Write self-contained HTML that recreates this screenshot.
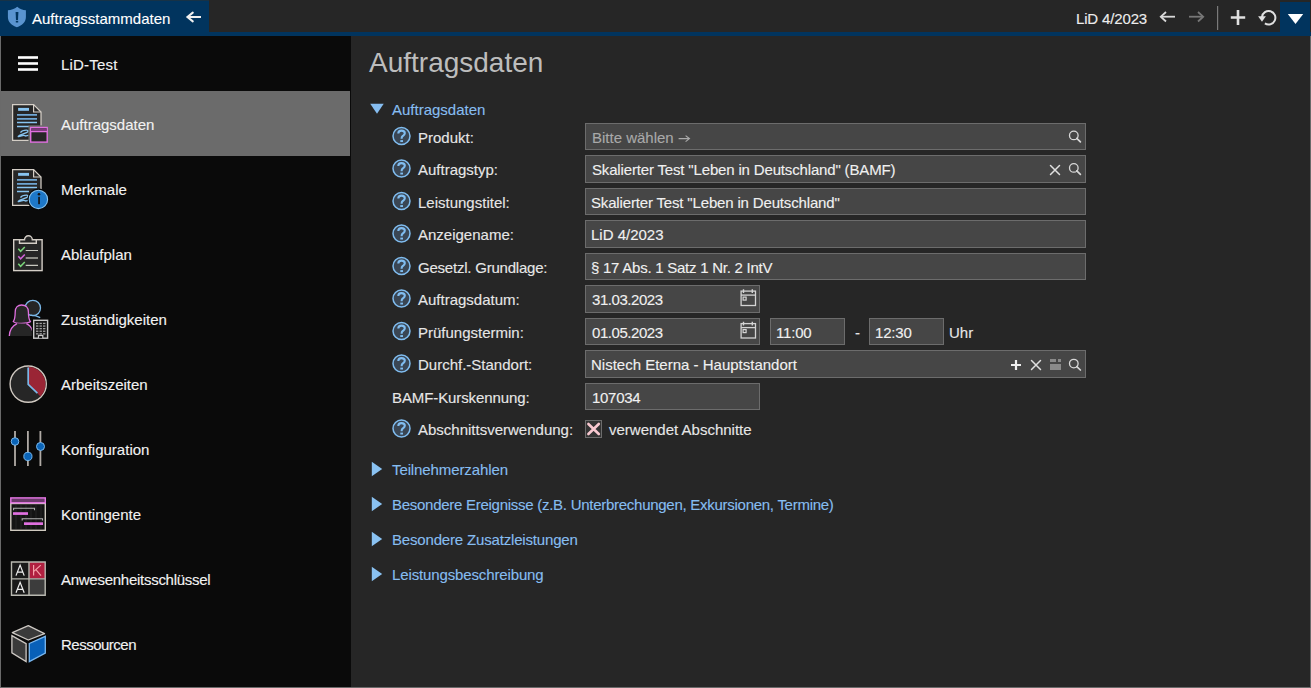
<!DOCTYPE html>
<html><head><meta charset="utf-8">
<style>
*{margin:0;padding:0;box-sizing:border-box}
html,body{width:1311px;height:688px;overflow:hidden;background:#262626;font-family:"Liberation Sans",sans-serif;font-size:15px;color:#ececec}
.a{position:absolute}
.t{position:absolute;white-space:pre;line-height:18px;margin-top:1px;-webkit-text-stroke:0.12px currentColor}
svg{position:absolute;overflow:visible}
#topline{left:0;top:0;width:209px;height:1px;background:#173246}
#tab{left:0;top:1px;width:209px;height:31px;background:#01345e}
#uline{left:0;top:32px;width:1311px;height:4px;background:#01345e}
#dd{left:1280px;top:2px;width:30px;height:30px;background:#01345e}
#side{left:0;top:36px;width:351px;height:651px;background:#0a0a0a}
#sideb{left:0;top:36px;width:1px;height:652px;background:#6a6a6a}
#rightb{left:1310px;top:36px;width:1px;height:652px;background:#6a6a6a}
#botb{left:0;top:687px;width:1311px;height:1px;background:#6a6a6a}
#sel{left:1px;top:91px;width:349px;height:65px;background:#6b6b6b}
.mi{left:61px;color:#f2f2f2}
.lbl{color:#e6e6e6}
.inp{position:absolute;background:#464646;border:1px solid #6c6c6c;height:28px}
.it{position:absolute;left:6px;top:5px;white-space:pre;line-height:18px;color:#f0f0f0;-webkit-text-stroke:0.12px currentColor}
.sec{color:#86bdf0}
</style></head><body>
<div class="a" id="topline"></div>
<div class="a" id="tab"></div>
<div class="a" id="uline"></div>
<div class="a" id="dd"></div>
<div class="a" id="side"></div>
<div class="a" id="sideb"></div>
<div class="a" id="rightb"></div>
<div class="a" id="botb"></div>
<div class="a" id="sel"></div>

<!-- title bar -->
<svg style="left:0;top:0" width="40" height="36" viewBox="0 0 40 36">
 <path d="M17.3,6.8 C14.5,9 11,10.2 7.9,10.2 V17 C7.9,22 11.5,25.5 16.9,27.2 C22.3,25.5 25.9,22 25.9,17 V10.2 C22.8,10.2 19.6,9 17.3,6.8Z" fill="#5a94d0"/>
 <path d="M15.6,12 H18.4 L18,20 H16 Z" fill="#01345e"/>
 <rect x="15.8" y="20.8" width="2.4" height="1.7" fill="#01345e"/>
</svg>
<div class="t" style="left:32px;top:9px;color:#fff">Auftragsstammdaten</div>
<svg style="left:180px;top:0" width="30" height="36" viewBox="0 0 30 36">
 <path d="M7,17 H21" stroke="#f0f0f0" stroke-width="2" fill="none"/>
 <path d="M12.8,12.6 L7.4,17 L12.8,21.4" stroke="#f0f0f0" stroke-width="2" fill="none" stroke-linecap="round"/>
</svg>
<div class="t" style="left:1076px;top:9px;color:#ededed;letter-spacing:-0.15px">LiD 4/2023</div>
<svg style="left:1150px;top:0" width="160" height="32" viewBox="0 0 160 32">
 <path d="M11,16.7 H25" stroke="#d8d8d8" stroke-width="1.8" fill="none"/>
 <path d="M16,12 L10.8,16.7 L16,21.5" stroke="#d8d8d8" stroke-width="1.8" fill="none"/>
 <path d="M39,16.7 H53" stroke="#777" stroke-width="1.8" fill="none"/>
 <path d="M48,12 L53.2,16.7 L48,21.5" stroke="#777" stroke-width="1.8" fill="none"/>
 <rect x="67" y="6" width="1.2" height="24" fill="#7a7a7a"/>
 <path d="M88,10 V25 M80.8,17.5 H95.2" stroke="#e0e0e0" stroke-width="2.6" fill="none"/>
 <path d="M112,17 A6.7,6.7 0 1 1 114.9,23.3" stroke="#e0e0e0" stroke-width="2" fill="none"/>
 <path d="M108.1,16.2 L115.9,16.2 L112,21.7 Z" fill="#e0e0e0"/>
 <path d="M137.8,13.9 H153.2 L145.5,24 Z" fill="#fff"/>
</svg>

<!-- sidebar -->
<svg style="left:0;top:36px" width="351" height="650" viewBox="0 36 351 650">
 <rect x="18" y="56.2" width="20" height="2.6" fill="#fff"/>
 <rect x="18" y="62.2" width="20" height="2.6" fill="#fff"/>
 <rect x="18" y="68.2" width="20" height="2.6" fill="#fff"/>
</svg>
<div class="t mi" style="top:55px;letter-spacing:0.2px">LiD-Test</div>
<div class="t mi" style="top:115px">Auftragsdaten</div>
<div class="t mi" style="top:180px">Merkmale</div>
<div class="t mi" style="top:245px">Ablaufplan</div>
<div class="t mi" style="top:310px">Zuständigkeiten</div>
<div class="t mi" style="top:375px">Arbeitszeiten</div>
<div class="t mi" style="top:440px">Konfiguration</div>
<div class="t mi" style="top:505px">Kontingente</div>
<div class="t mi" style="top:570px;letter-spacing:-0.27px">Anwesenheitsschlüssel</div>
<div class="t mi" style="top:635px;letter-spacing:-0.5px">Ressourcen</div>
<!--ICONS--><svg style="left:0;top:0" width="351" height="688" viewBox="0 0 351 688">
<g transform="translate(5,97)"><path d="M7.6,7.6 H28.6 L36,15 V43.3 H7.6 Z" fill="#262626" stroke="#d4cec6" stroke-width="1.25"/><path d="M28.6,7.6 V15 H36" fill="none" stroke="#d4cec6" stroke-width="1.2"/><rect x="13.1" y="10.9" width="10.9" height="2.9" fill="#88c4f0"/><path d="M12,17.8 H32 M12,21.8 H32" stroke="#6fa6d4" stroke-width="1.7"/><path d="M12,25.4 H32 M12,29.4 H24" stroke="#88c4f0" stroke-width="1.5"/><path d="M15.5,35.6 C16.5,33.9 19,33.1 21.5,33.1 C23.6,33.1 23.6,34.6 21.5,35.6 C19.5,36.6 17,37.1 15,38.1 C13.5,38.9 12.8,39.6 13.6,39.6 C15.5,39.6 17,38.4 18.5,38.4 C20,38.4 20,39.1 21,38.9 C22,38.7 22.5,38.4 23.5,38.4" fill="none" stroke="#88c4f0" stroke-width="1.4"/><rect x="23.5" y="28.3" width="21" height="19" fill="#6b6b6b"/><rect x="25.7" y="30.5" width="16.5" height="14.6" fill="#262626" stroke="#e070e0" stroke-width="1.4"/><rect x="26.4" y="31.2" width="15.1" height="2.8" fill="#7a3a7a"/><path d="M25.7,34.6 H42.2" stroke="#e070e0" stroke-width="1.3"/></g>
<g transform="translate(5,162)"><path d="M7.6,7.6 H28.6 L36,15 V43.3 H7.6 Z" fill="#262626" stroke="#d4cec6" stroke-width="1.25"/><path d="M28.6,7.6 V15 H36" fill="none" stroke="#d4cec6" stroke-width="1.2"/><rect x="13.1" y="10.9" width="10.9" height="2.9" fill="#88c4f0"/><path d="M12,17.8 H32 M12,21.8 H32" stroke="#6fa6d4" stroke-width="1.7"/><path d="M12,25.4 H32 M12,29.4 H24" stroke="#88c4f0" stroke-width="1.5"/><path d="M15.5,35.6 C16.5,33.9 19,33.1 21.5,33.1 C23.6,33.1 23.6,34.6 21.5,35.6 C19.5,36.6 17,37.1 15,38.1 C13.5,38.9 12.8,39.6 13.6,39.6 C15.5,39.6 17,38.4 18.5,38.4 C20,38.4 20,39.1 21,38.9 C22,38.7 22.5,38.4 23.5,38.4" fill="none" stroke="#88c4f0" stroke-width="1.4"/><circle cx="33.4" cy="37.4" r="10.8" fill="#0a0a0a"/><circle cx="33.4" cy="37.4" r="9.2" fill="#1e78c8" stroke="#88c4f0" stroke-width="1.1"/><circle cx="34" cy="32.2" r="1.3" fill="#141414"/><rect x="33.2" y="34.8" width="1.7" height="7.4" fill="#141414"/></g>
<g transform="translate(5,227)"><rect x="8.7" y="12.7" width="28.4" height="30.9" fill="#262626" stroke="#d4cec6" stroke-width="1.4"/><path d="M14.5,12.7 V16.3 H31.3 V12.7 H27.3 A3.9,3.9 0 0 0 19.5,12.7 Z" fill="#262626" stroke="#d4cec6" stroke-width="1.4"/><path d="M13.3,21.8 L15.6,24.3 L19.8,20" fill="none" stroke="#7ad67a" stroke-width="1.5"/><path d="M13.3,29.3 L15.6,31.8 L19.8,27.5" fill="none" stroke="#d064d8" stroke-width="1.5"/><path d="M13.3,36.8 L15.6,39.3 L19.8,35" fill="none" stroke="#7ad67a" stroke-width="1.5"/><path d="M20.7,23.5 H33 M20.7,38.3 H33" stroke="#c8c8c0" stroke-width="1.2"/><path d="M20.7,31 H33" stroke="#a8a8a0" stroke-width="1.6"/></g>
<g transform="translate(5,292)"><circle cx="27.8" cy="16" r="7.7" fill="#262626" stroke="#7ab8e8" stroke-width="1.3"/><path d="M25.5,23.2 C29,23.5 32,24 35.2,25.6" fill="none" stroke="#7ab8e8" stroke-width="1.3"/><path d="M8.3,29.6 C10,27 10.2,24 10.2,20 C10.2,15.5 13,13 16.6,13 C20.5,13 23.4,15.5 23.4,20 C23.4,24 23.6,27 25.4,29.6 C23,31.2 19,31.3 16.6,31.3 C14,31.3 10,31.2 8.3,29.6 Z" fill="#262626" stroke="#e070e0" stroke-width="1.3"/><path d="M4.3,44 C4.6,37.5 8,33.5 12,31.6 H21.4 C24.5,33 26.5,35.5 27.3,38.5 V44 Z" fill="#262626" stroke="none"/><path d="M4.3,44 C4.6,37.5 8,33.5 12,31.6 M21.4,31.6 C24.5,33 26.5,35.5 27.3,38.5" fill="none" stroke="#e070e0" stroke-width="1.3"/><rect x="26.8" y="26.5" width="17.5" height="21.5" fill="#0a0a0a"/><rect x="28.7" y="28.3" width="13.9" height="17.9" fill="#1a1a1a" stroke="#c8c8c8" stroke-width="1.4"/><rect x="31" y="30.8" width="2.4" height="1.3" fill="#a0a0a0"/><rect x="31" y="33.4" width="2.4" height="1.3" fill="#a0a0a0"/><rect x="31" y="36" width="2.4" height="1.3" fill="#a0a0a0"/><rect x="31" y="38.6" width="2.4" height="1.3" fill="#a0a0a0"/><rect x="31" y="41.2" width="2.4" height="1.3" fill="#a0a0a0"/><rect x="34.5" y="30.8" width="2.4" height="1.3" fill="#a0a0a0"/><rect x="34.5" y="33.4" width="2.4" height="1.3" fill="#a0a0a0"/><rect x="34.5" y="36" width="2.4" height="1.3" fill="#a0a0a0"/><rect x="34.5" y="38.6" width="2.4" height="1.3" fill="#a0a0a0"/><rect x="34.5" y="41.2" width="2.4" height="1.3" fill="#a0a0a0"/><rect x="38" y="30.8" width="2.4" height="1.3" fill="#a0a0a0"/><rect x="38" y="33.4" width="2.4" height="1.3" fill="#a0a0a0"/><rect x="38" y="36" width="2.4" height="1.3" fill="#a0a0a0"/><rect x="38" y="38.6" width="2.4" height="1.3" fill="#a0a0a0"/><rect x="38" y="41.2" width="2.4" height="1.3" fill="#a0a0a0"/><path d="M33.5,46.2 V43.4 H37.8 V46.2" fill="#1a1a1a" stroke="#c8c8c8" stroke-width="1.2"/></g>
<g transform="translate(5,357)"><circle cx="23.2" cy="27.1" r="18.1" fill="#262626" stroke="#cfc8c0" stroke-width="1.4"/><path d="M23.2,27.1 L23.2,9.7 A17.4,17.4 0 0 1 35.5,39.4 Z" fill="#9a2535"/><path d="M23.2,10.4 V27.4 L32.4,36.2" fill="none" stroke="#7ab8e8" stroke-width="1.7"/></g>
<g transform="translate(5,422)"><path d="M10,9.1 V44 M22.9,9.1 V44 M35.4,9.1 V44" stroke="#b0aaa5" stroke-width="1.8"/><circle cx="10" cy="19.5" r="3.8" fill="#0a64b8" stroke="#7ab8ec" stroke-width="1"/><circle cx="22.9" cy="34.4" r="4.1" fill="#0a64b8" stroke="#7ab8ec" stroke-width="1"/><circle cx="35.5" cy="24.5" r="4" fill="#0a64b8" stroke="#7ab8ec" stroke-width="1"/></g>
<g transform="translate(5,487)"><rect x="5.8" y="16.5" width="34.5" height="26.8" fill="#141414" stroke="#d0cac0" stroke-width="1.4"/><path d="M11,18 V42" stroke="#2a2a2a" stroke-width="0.8"/><path d="M16,18 V42" stroke="#2a2a2a" stroke-width="0.8"/><path d="M21,18 V42" stroke="#2a2a2a" stroke-width="0.8"/><path d="M26,18 V42" stroke="#2a2a2a" stroke-width="0.8"/><path d="M31,18 V42" stroke="#2a2a2a" stroke-width="0.8"/><path d="M36,18 V42" stroke="#2a2a2a" stroke-width="0.8"/><rect x="5.8" y="10.9" width="34.5" height="4.9" fill="#6a3a6a" stroke="#e878e8" stroke-width="1.4"/><path d="M8.6,23.2 V21.3 H29.5 V23.2" fill="none" stroke="#b0b0b0" stroke-width="1.1"/><rect x="8" y="25.2" width="15" height="2.7" fill="#e070e0"/><path d="M17.2,33.6 V31.7 H37.5 V33.6" fill="none" stroke="#b0b0b0" stroke-width="1.1"/><rect x="19" y="35.3" width="19" height="2.7" fill="#e070e0"/></g>
<g transform="translate(5,552)"><rect x="6.5" y="10" width="34" height="33.3" fill="#1a1a1a"/><rect x="24.3" y="10" width="16.2" height="16.6" fill="#b02040"/><rect x="24.3" y="27.3" width="16.2" height="16" fill="#3c3c3c"/><path d="M6.5,10 H40.2 V43.3 H6.5 Z M24,10 V43.3 M6.5,26.9 H40.2" fill="none" stroke="#b8b8b0" stroke-width="1.4"/><path d="M11,23.6 L15.1,13.1 L19.2,23.6 M12.5,20.1 H17.7" fill="none" stroke="#f0f0f0" stroke-width="1.2"/><path d="M11,40.8 L15.1,30.3 L19.2,40.8 M12.5,37.3 H17.7" fill="none" stroke="#f0f0f0" stroke-width="1.2"/><path d="M28.6,13.1 V23.6 M35.8,13.1 L28.6,19.6 M30.9,17.6 L36,23.6" fill="none" stroke="#f4a0a8" stroke-width="1.2"/></g>
<g transform="translate(5,617)"><path d="M7.3,15.6 L23.3,8.7 L39.5,16.6 L23.3,23 Z" fill="#3a3a3a" stroke="#cdc8c3" stroke-width="1.3" stroke-linejoin="round"/><path d="M6.9,18.6 L21.1,26.6 V44.6 L6.9,35.8 Z" fill="#3a3a3a" stroke="#cdc8c3" stroke-width="1.3"/><path d="M24.3,26.5 L40.3,19.3 V36 L24.3,44.6 Z" fill="#0860b8" stroke="#7ab8f0" stroke-width="1.3"/></g>
</svg><!--/ICONS-->

<!-- main -->
<div class="t" style="left:369px;top:46px;font-size:28px;line-height:32px;color:#bdbdbd;-webkit-text-stroke:0">Auftragsdaten</div>
<svg style="left:360px;top:95px" width="30" height="500" viewBox="0 0 30 500">
 <path d="M10.2,8.7 H23.7 L17,18.7 Z" fill="#86bdf0"/>
 <path d="M11.8,366.8 L22.2,374 L11.8,381.2 Z" fill="#8ac2f2"/>
 <path d="M11.8,401.8 L22.2,409 L11.8,416.2 Z" fill="#8ac2f2"/>
 <path d="M11.8,436.8 L22.2,444 L11.8,451.2 Z" fill="#8ac2f2"/>
 <path d="M11.8,471.8 L22.2,479 L11.8,486.2 Z" fill="#8ac2f2"/>
</svg>
<div class="t sec" style="left:392px;top:100px">Auftragsdaten</div>
<div class="t sec" style="left:392px;top:460px;letter-spacing:-0.1px">Teilnehmerzahlen</div>
<div class="t sec" style="left:392px;top:495px;letter-spacing:-0.27px">Besondere Ereignisse (z.B. Unterbrechungen, Exkursionen, Termine)</div>
<div class="t sec" style="left:392px;top:530px;letter-spacing:-0.17px">Besondere Zusatzleistungen</div>
<div class="t sec" style="left:392px;top:565px;letter-spacing:-0.13px">Leistungsbeschreibung</div>

<svg style="left:380px;top:115px" width="40" height="340" viewBox="380 115 40 340">
<g transform="translate(0,0.0)"><circle cx="401.5" cy="136" r="8.5" fill="#3a4654" stroke="#80bdf0" stroke-width="1.5"/><path d="M398.3,133.5 C398.3,131.5 399.8,130.6 401.5,130.6 C403.4,130.6 404.8,131.6 404.8,133.2 C404.8,134.7 403.7,135.3 402.8,135.9 C401.9,136.6 401.6,137.2 401.6,138.8" stroke="#80bdf0" stroke-width="2.1" fill="none"/><rect x="400.3" y="140.1" width="2.7" height="1.9" fill="#80bdf0"/></g>
<g transform="translate(0,32.5)"><circle cx="401.5" cy="136" r="8.5" fill="#3a4654" stroke="#80bdf0" stroke-width="1.5"/><path d="M398.3,133.5 C398.3,131.5 399.8,130.6 401.5,130.6 C403.4,130.6 404.8,131.6 404.8,133.2 C404.8,134.7 403.7,135.3 402.8,135.9 C401.9,136.6 401.6,137.2 401.6,138.8" stroke="#80bdf0" stroke-width="2.1" fill="none"/><rect x="400.3" y="140.1" width="2.7" height="1.9" fill="#80bdf0"/></g>
<g transform="translate(0,65.0)"><circle cx="401.5" cy="136" r="8.5" fill="#3a4654" stroke="#80bdf0" stroke-width="1.5"/><path d="M398.3,133.5 C398.3,131.5 399.8,130.6 401.5,130.6 C403.4,130.6 404.8,131.6 404.8,133.2 C404.8,134.7 403.7,135.3 402.8,135.9 C401.9,136.6 401.6,137.2 401.6,138.8" stroke="#80bdf0" stroke-width="2.1" fill="none"/><rect x="400.3" y="140.1" width="2.7" height="1.9" fill="#80bdf0"/></g>
<g transform="translate(0,97.5)"><circle cx="401.5" cy="136" r="8.5" fill="#3a4654" stroke="#80bdf0" stroke-width="1.5"/><path d="M398.3,133.5 C398.3,131.5 399.8,130.6 401.5,130.6 C403.4,130.6 404.8,131.6 404.8,133.2 C404.8,134.7 403.7,135.3 402.8,135.9 C401.9,136.6 401.6,137.2 401.6,138.8" stroke="#80bdf0" stroke-width="2.1" fill="none"/><rect x="400.3" y="140.1" width="2.7" height="1.9" fill="#80bdf0"/></g>
<g transform="translate(0,130.0)"><circle cx="401.5" cy="136" r="8.5" fill="#3a4654" stroke="#80bdf0" stroke-width="1.5"/><path d="M398.3,133.5 C398.3,131.5 399.8,130.6 401.5,130.6 C403.4,130.6 404.8,131.6 404.8,133.2 C404.8,134.7 403.7,135.3 402.8,135.9 C401.9,136.6 401.6,137.2 401.6,138.8" stroke="#80bdf0" stroke-width="2.1" fill="none"/><rect x="400.3" y="140.1" width="2.7" height="1.9" fill="#80bdf0"/></g>
<g transform="translate(0,162.5)"><circle cx="401.5" cy="136" r="8.5" fill="#3a4654" stroke="#80bdf0" stroke-width="1.5"/><path d="M398.3,133.5 C398.3,131.5 399.8,130.6 401.5,130.6 C403.4,130.6 404.8,131.6 404.8,133.2 C404.8,134.7 403.7,135.3 402.8,135.9 C401.9,136.6 401.6,137.2 401.6,138.8" stroke="#80bdf0" stroke-width="2.1" fill="none"/><rect x="400.3" y="140.1" width="2.7" height="1.9" fill="#80bdf0"/></g>
<g transform="translate(0,195.0)"><circle cx="401.5" cy="136" r="8.5" fill="#3a4654" stroke="#80bdf0" stroke-width="1.5"/><path d="M398.3,133.5 C398.3,131.5 399.8,130.6 401.5,130.6 C403.4,130.6 404.8,131.6 404.8,133.2 C404.8,134.7 403.7,135.3 402.8,135.9 C401.9,136.6 401.6,137.2 401.6,138.8" stroke="#80bdf0" stroke-width="2.1" fill="none"/><rect x="400.3" y="140.1" width="2.7" height="1.9" fill="#80bdf0"/></g>
<g transform="translate(0,227.5)"><circle cx="401.5" cy="136" r="8.5" fill="#3a4654" stroke="#80bdf0" stroke-width="1.5"/><path d="M398.3,133.5 C398.3,131.5 399.8,130.6 401.5,130.6 C403.4,130.6 404.8,131.6 404.8,133.2 C404.8,134.7 403.7,135.3 402.8,135.9 C401.9,136.6 401.6,137.2 401.6,138.8" stroke="#80bdf0" stroke-width="2.1" fill="none"/><rect x="400.3" y="140.1" width="2.7" height="1.9" fill="#80bdf0"/></g>
<g transform="translate(0,292.5)"><circle cx="401.5" cy="136" r="8.5" fill="#3a4654" stroke="#80bdf0" stroke-width="1.5"/><path d="M398.3,133.5 C398.3,131.5 399.8,130.6 401.5,130.6 C403.4,130.6 404.8,131.6 404.8,133.2 C404.8,134.7 403.7,135.3 402.8,135.9 C401.9,136.6 401.6,137.2 401.6,138.8" stroke="#80bdf0" stroke-width="2.1" fill="none"/><rect x="400.3" y="140.1" width="2.7" height="1.9" fill="#80bdf0"/></g>
</svg>
<div class="t lbl" style="left:418px;top:128px">Produkt:</div>
<div class="t lbl" style="left:418px;top:160px">Auftragstyp:</div>
<div class="t lbl" style="left:418px;top:193px">Leistungstitel:</div>
<div class="t lbl" style="left:418px;top:225px">Anzeigename:</div>
<div class="t lbl" style="left:418px;top:258px;letter-spacing:-0.22px">Gesetzl. Grundlage:</div>
<div class="t lbl" style="left:418px;top:290px">Auftragsdatum:</div>
<div class="t lbl" style="left:418px;top:323px">Prüfungstermin:</div>
<div class="t lbl" style="left:418px;top:355px">Durchf.-Standort:</div>
<div class="t lbl" style="left:392px;top:388px;letter-spacing:-0.1px">BAMF-Kurskennung:</div>
<div class="t lbl" style="left:418px;top:420px">Abschnittsverwendung:</div>

<div class="inp" style="left:585px;top:123px;width:501px;height:27px"><div class="it" style="color:#a9a9a9">Bitte wählen</div></div>
<div class="inp" style="left:585px;top:155px;width:501px"><div class="it" style="letter-spacing:-0.16px">Skalierter Test "Leben in Deutschland" (BAMF)</div></div>
<div class="inp" style="left:585px;top:188px;width:501px;height:27px"><div class="it" style="left:5px;letter-spacing:-0.16px">Skalierter Test "Leben in Deutschland"</div></div>
<div class="inp" style="left:585px;top:220px;width:501px"><div class="it" style="left:5px">LiD 4/2023</div></div>
<div class="inp" style="left:585px;top:253px;width:501px;height:27px"><div class="it" style="left:5px;letter-spacing:-0.25px">§ 17 Abs. 1 Satz 1 Nr. 2 IntV</div></div>
<div class="inp" style="left:585px;top:285px;width:175px"><div class="it" style="letter-spacing:-0.45px">31.03.2023</div></div>
<div class="inp" style="left:585px;top:318px;width:175px;height:27px"><div class="it" style="letter-spacing:-0.45px">01.05.2023</div></div>
<div class="inp" style="left:770px;top:318px;width:75px;height:27px"><div class="it" style="left:5px;letter-spacing:-0.2px">11:00</div></div>
<div class="t lbl" style="left:855px;top:323px">-</div>
<div class="inp" style="left:869px;top:318px;width:75px;height:27px"><div class="it" style="left:5px;letter-spacing:-0.2px">12:30</div></div>
<div class="t lbl" style="left:949px;top:323px">Uhr</div>
<div class="inp" style="left:585px;top:350px;width:501px"><div class="it" style="left:5px">Nistech Eterna - Hauptstandort</div></div>
<div class="inp" style="left:585px;top:383px;width:175px;height:27px"><div class="it" style="letter-spacing:-0.3px">107034</div></div>
<div class="a" style="left:585px;top:420px;width:17px;height:18px;background:#333;border:1px solid #6c6c6c"></div>
<div class="t lbl" style="left:609px;top:420px">verwendet Abschnitte</div>
<svg style="left:0;top:0" width="1311" height="688" viewBox="0 0 1311 688">
<circle cx="1073.8" cy="135.4" r="4.3" stroke="#d8d8d8" stroke-width="1.3" fill="none"/><path d="M1076.8,138.4 L1080.3999999999999,141.8" stroke="#d8d8d8" stroke-width="1.7" stroke-linecap="round"/>
<path d="M1050.5,165.5 L1059.5,174.5 M1059.5,165.5 L1050.5,174.5" stroke="#e0e0e0" stroke-width="1.5" stroke-linecap="round"/>
<circle cx="1073.8" cy="167.9" r="4.3" stroke="#d8d8d8" stroke-width="1.3" fill="none"/><path d="M1076.8,170.9 L1080.3999999999999,174.3" stroke="#d8d8d8" stroke-width="1.7" stroke-linecap="round"/>
<g transform="translate(740.5,290.5)" stroke="#d4d4d4" fill="none" stroke-width="1.3"><rect x="0.6" y="0.6" width="14.4" height="14.4"/><path d="M0.6,4.6 H15"/><path d="M3,-1.2 V2.6 M11.8,-1.2 V2.6" stroke-width="1.4"/><rect x="2.6" y="6.6" width="3" height="3" stroke-width="1.2"/></g>
<g transform="translate(740.5,323)" stroke="#d4d4d4" fill="none" stroke-width="1.3"><rect x="0.6" y="0.6" width="14.4" height="14.4"/><path d="M0.6,4.6 H15"/><path d="M3,-1.2 V2.6 M11.8,-1.2 V2.6" stroke-width="1.4"/><rect x="2.6" y="6.6" width="3" height="3" stroke-width="1.2"/></g>
<path d="M1016,360 V370 M1011,365 H1021" stroke="#f0f0f0" stroke-width="2.2"/>
<path d="M1031.5,360.5 L1040.5,369.5 M1040.5,360.5 L1031.5,369.5" stroke="#e0e0e0" stroke-width="1.5" stroke-linecap="round"/>
<rect x="1050" y="359" width="6" height="3" fill="#8a8a8a"/><rect x="1058" y="359" width="3" height="3" fill="#8a8a8a"/><rect x="1050" y="364" width="11" height="6" fill="#8a8a8a"/>
<circle cx="1073.8" cy="363.6" r="4.3" stroke="#d8d8d8" stroke-width="1.3" fill="none"/><path d="M1076.8,366.6 L1080.3999999999999,370.0" stroke="#d8d8d8" stroke-width="1.7" stroke-linecap="round"/>
<path d="M588.4,424 L598.8,434 M598.8,424 L588.4,434" stroke="#f8c8d0" stroke-width="2.6" stroke-linecap="round"/>
<path d="M678.6,138.6 H689.4 M685.6,135.6 L689.4,138.6 L685.6,141.6" stroke="#a9a9a9" stroke-width="1.2" fill="none"/>
</svg>
</body></html>
